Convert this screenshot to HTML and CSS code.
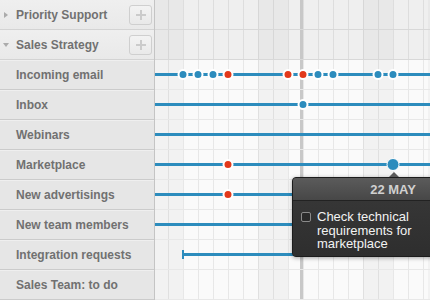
FILE: index.html
```html
<!DOCTYPE html>
<html lang="en">
<head>
  <meta charset="UTF-8">
  <title>Sales Planner</title>
  <link rel="stylesheet" href="styles.css">
</head>
<body>
  <div class="gantt">
    <div class="sidebar">
      <div class="group">
        <span class="caret closed"></span>
        <span class="label">Priority Support</span>
        <button class="add" type="button">
          <svg width="10" height="10" viewBox="0 0 10 10"><path d="M4 0h2v4h4v2H6v4H4V6H0V4h4z" fill="#cbcbcb"/></svg>
        </button>
      </div>
      <div class="group">
        <span class="caret open"></span>
        <span class="label">Sales Strategy</span>
        <button class="add" type="button">
          <svg width="10" height="10" viewBox="0 0 10 10"><path d="M4 0h2v4h4v2H6v4H4V6H0V4h4z" fill="#cbcbcb"/></svg>
        </button>
      </div>
      <div class="item">Incoming email</div>
      <div class="item">Inbox</div>
      <div class="item">Webinars</div>
      <div class="item">Marketplace</div>
      <div class="item">New advertisings</div>
      <div class="item">New team members</div>
      <div class="item">Integration requests</div>
      <div class="item">Sales Team: to do</div>
    </div>

    <div class="timeline">
      <div class="today"></div>

      <div class="trow head"></div>
      <div class="trow head"></div>

      <div class="trow">
        <div class="track"></div>
        <span class="dot" style="left:28px"></span>
        <span class="dot" style="left:43px"></span>
        <span class="dot" style="left:58px"></span>
        <span class="dot red" style="left:73px"></span>
        <span class="dot red" style="left:133px"></span>
        <span class="dot red" style="left:148px"></span>
        <span class="dot" style="left:163px"></span>
        <span class="dot" style="left:178px"></span>
        <span class="dot" style="left:223px"></span>
        <span class="dot" style="left:238px"></span>
      </div>
      <div class="trow">
        <div class="track"></div>
        <span class="dot" style="left:148px"></span>
      </div>
      <div class="trow">
        <div class="track"></div>
      </div>
      <div class="trow">
        <div class="track"></div>
        <span class="dot red" style="left:73px"></span>
        <span class="dot big" style="left:238px"></span>
      </div>
      <div class="trow">
        <div class="track"></div>
        <span class="dot red" style="left:73px"></span>
      </div>
      <div class="trow">
        <div class="track"></div>
      </div>
      <div class="trow">
        <div class="track start" style="left:28px"></div>
      </div>
      <div class="trow"></div>

      <div class="tip">
        <div class="tip-head">22 MAY</div>
        <div class="tip-body">
          <span class="check"></span>
          <span class="tip-text">Check technical requirements for marketplace</span>
        </div>
      </div>
    </div>
  </div>
</body>
</html>
```

FILE: styles.css
```css
body {
  margin: 0;
  width: 430px;
  height: 300px;
  overflow: hidden;
  font-family: "Liberation Sans", Arial, sans-serif;
}

.gantt {
  display: flex;
  height: 300px;
}

/* left column */

.sidebar {
  width: 154px;
  flex: none;
  border-right: 1px solid #c4c4c4;
  background: #e6e6e6;
}

.group {
  display: flex;
  align-items: center;
  height: 29px;
  padding-right: 2px;
  border-bottom: 1px solid #d3d3d3;
  background: linear-gradient(#efefef, #e9e9e9);
}

.caret {
  width: 0;
  height: 0;
}

.caret.closed {
  margin: 0 8px 0 4px;
  border-left: 4px solid #ababab;
  border-top: 3px solid transparent;
  border-bottom: 3px solid transparent;
}

.caret.open {
  margin: 0 7px 0 3px;
  border-top: 4px solid #ababab;
  border-left: 3px solid transparent;
  border-right: 3px solid transparent;
}

.label {
  flex: 1;
  font-size: 12px;
  font-weight: bold;
  color: #717171;
}

.add {
  display: flex;
  align-items: center;
  justify-content: center;
  box-sizing: border-box;
  width: 23px;
  height: 20px;
  padding: 0;
  border: 1px solid #cfcfcf;
  border-radius: 3px;
  background: linear-gradient(#f3f3f3, #e9e9e9);
}

.item {
  height: 29px;
  line-height: 30px;
  padding-left: 16px;
  border-bottom: 1px solid #cbcbcb;
  box-shadow: inset 0 1px #efefef;
  font-size: 12px;
  font-weight: bold;
  color: #717171;
}

/* timeline grid */

.timeline {
  position: relative;
  flex: 1;
  background-image:
    repeating-linear-gradient(90deg, transparent 0 13px, rgba(0, 0, 0, 0.075) 13px 14px, transparent 14px 15px),
    repeating-linear-gradient(90deg, rgba(0, 0, 0, 0.032) 0 30px, transparent 30px 105px),
    linear-gradient(#efefef 0 60px, #fafafa 60px);
  background-position: 0 0, -2px 0, 0 0;
}

.trow {
  position: relative;
  height: 29px;
  border-bottom: 1px solid #e8e8e8;
}

.trow.head {
  border-bottom-color: #d8d8d8;
}

.today {
  position: absolute;
  top: 0;
  bottom: 0;
  left: 145px;
  width: 3px;
  background: #c8c8c8;
}

.track {
  position: absolute;
  top: 13px;
  left: 0;
  right: 0;
  height: 3px;
  background: #2c8cbd;
}

.track.start::before {
  content: "";
  position: absolute;
  left: -1px;
  top: -3px;
  width: 2px;
  height: 9px;
  background: #2c8cbd;
}

.dot {
  position: absolute;
  top: 9px;
  width: 7px;
  height: 7px;
  border: 2px solid #fff;
  border-radius: 50%;
  background: #2c8cbd;
  transform: translateX(-50%);
}

.dot.red {
  background: #e2391b;
}

.dot.big {
  top: 8px;
  width: 11px;
  height: 11px;
  border-width: 1px;
}

/* popup */

.tip {
  position: absolute;
  left: 137px;
  top: 177px;
  width: 150px;
  border: 1px solid #1c1c1c;
  border-radius: 4px;
  background: #343434;
  box-shadow: 0 1px 4px rgba(0, 0, 0, 0.35);
  z-index: 3;
}

.tip::before {
  content: "";
  position: absolute;
  left: 96px;
  top: -6px;
  border-left: 5px solid transparent;
  border-right: 5px solid transparent;
  border-bottom: 5px solid #5a5a5a;
}

.tip-head {
  height: 22px;
  line-height: 23px;
  padding-right: 27px;
  text-align: right;
  border-bottom: 1px solid #222;
  border-radius: 3px 3px 0 0;
  background: linear-gradient(#5b5b5b, #474747);
  font-size: 13px;
  font-weight: bold;
  color: #d0d0d0;
}

.tip-body {
  display: flex;
  align-items: flex-start;
  gap: 6px;
  padding: 9px 8px 5px 8px;
  background: linear-gradient(#363636, #2e2e2e);
  border-radius: 0 0 3px 3px;
}

.check {
  box-sizing: border-box;
  width: 10px;
  height: 10px;
  margin-top: 2px;
  flex: none;
  border: 1px solid #8a8a8a;
  border-radius: 2px;
  background: #2a2a2a;
}

.tip-text {
  width: 106px;
  font-size: 13px;
  line-height: 13.5px;
  color: #f2f2f2;
}
```
